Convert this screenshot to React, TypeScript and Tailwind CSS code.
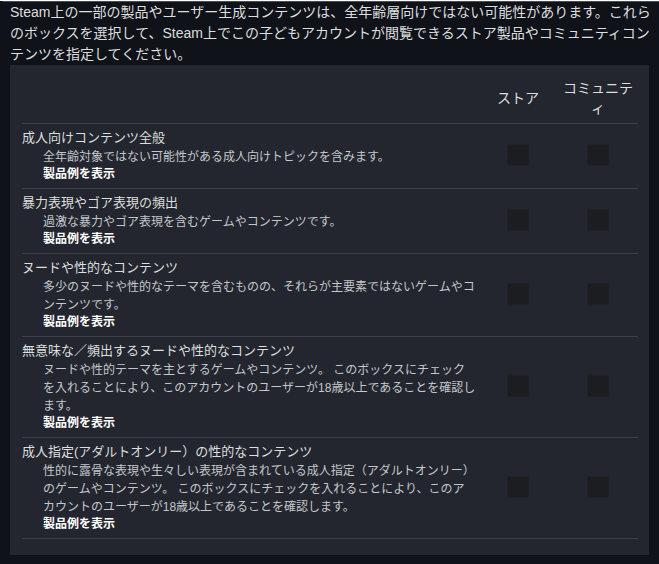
import React from "react";

type Row = { title: string; desc: string[] };

const rows: Row[] = [
  {
    title: "成人向けコンテンツ全般",
    desc: ["全年齢対象ではない可能性がある成人向けトピックを含みます。"],
  },
  {
    title: "暴力表現やゴア表現の頻出",
    desc: ["過激な暴力やゴア表現を含むゲームやコンテンツです。"],
  },
  {
    title: "ヌードや性的なコンテンツ",
    desc: [
      "多少のヌードや性的なテーマを含むものの、それらが主要素ではないゲームやコ",
      "ンテンツです。",
    ],
  },
  {
    title: "無意味な／頻出するヌードや性的なコンテンツ",
    desc: [
      "ヌードや性的テーマを主とするゲームやコンテンツ。 このボックスにチェック",
      "を入れることにより、このアカウントのユーザーが18歳以上であることを確認し",
      "ます。",
    ],
  },
  {
    title: "成人指定(アダルトオンリー）の性的なコンテンツ",
    desc: [
      "性的に露骨な表現や生々しい表現が含まれている成人指定（アダルトオンリー）",
      "のゲームやコンテンツ。 このボックスにチェックを入れることにより、このア",
      "カウントのユーザーが18歳以上であることを確認します。",
    ],
  },
];

function Box() {
  return (
    <div className="flex justify-center">
      <div className="w-[22px] h-[22px] rounded-[2px] bg-[#1c1d21] border border-[#202126]" />
    </div>
  );
}

export default function App() {
  return (
    <div
      className="w-[659px] min-h-[564px] bg-[#0f1218] text-[#dcdedf]"
      style={{ fontFamily: '"Liberation Sans", "Noto Sans CJK JP", sans-serif' }}
    >
      <div className="h-px mt-[1px] ml-[3px] bg-[#4a4d54]" />
      <div className="px-[10px]">
        <p className="text-[14px] leading-[21px] whitespace-nowrap text-[#dcdedf]">
          Steam上の一部の製品やユーザー生成コンテンツは、全年齢層向けではない可能性があります。これら
          <br />
          のボックスを選択して、Steam上でこの子どもアカウントが閲覧できるストア製品やコミュニティコン
          <br />
          テンツを指定してください。
        </p>
        <div className="bg-[#23262e] pl-[12px] pr-[11px] pb-[16px]">
          <div className="grid grid-cols-[1fr_80px_80px] items-center pt-[13px] pb-[5px] border-b border-[#3d4048] text-[14px] leading-[20px] text-[#dcdedf]">
            <div />
            <div className="text-center">ストア</div>
            <div className="text-center">コミュニティ</div>
          </div>
          {rows.map((r) => (
            <div
              key={r.title}
              className="grid grid-cols-[1fr_80px_80px] items-center pt-[4px] pb-[6px] border-b border-[#3d4048]"
            >
              <div>
                <div className="text-[13px] leading-[20px] text-[#dcdedf] whitespace-nowrap">
                  {r.title}
                </div>
                <div className="pl-[21px]">
                  <div className="text-[12px] leading-[18px] text-[#c3c8cc] whitespace-nowrap">
                    {r.desc.map((d, i) => (
                      <div key={i}>{d}</div>
                    ))}
                  </div>
                  <div className="text-[12px] leading-[16px] font-bold text-white">
                    製品例を表示
                  </div>
                </div>
              </div>
              <Box />
              <Box />
            </div>
          ))}
        </div>
      </div>
    </div>
  );
}
